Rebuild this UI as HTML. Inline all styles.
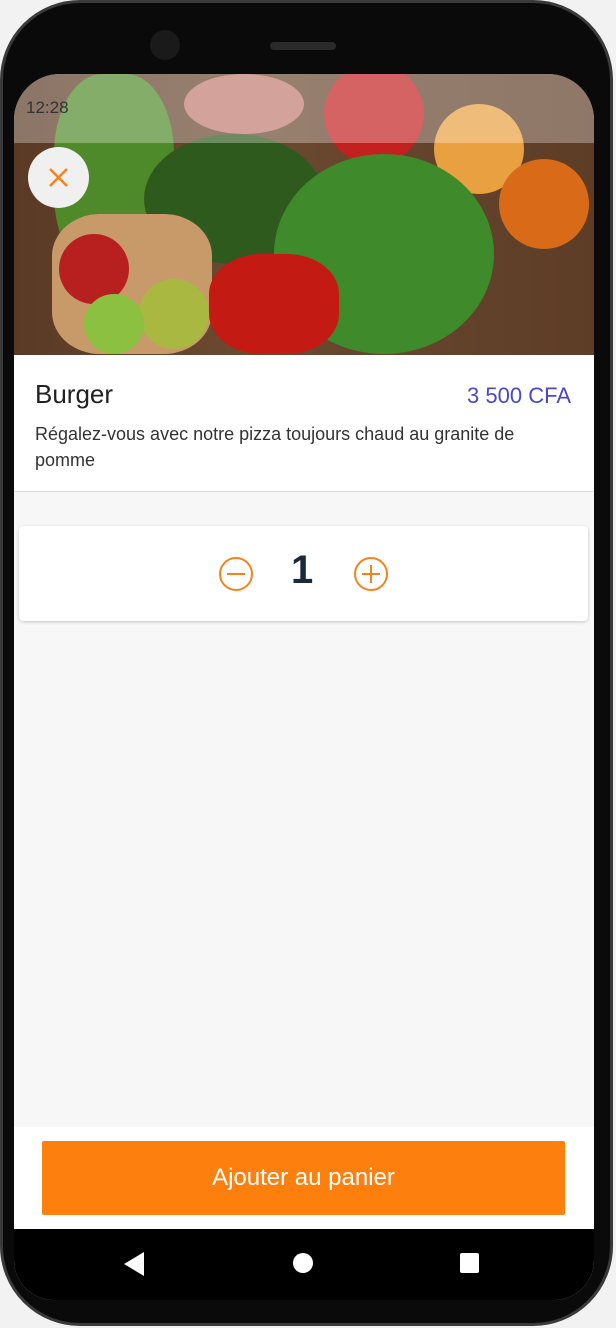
<!DOCTYPE html>
<html><head><meta charset="utf-8"><style>
*{margin:0;padding:0;box-sizing:border-box}
body{width:616px;height:1328px;background:#f2f2f2;position:relative;overflow:hidden;font-family:"Liberation Sans",sans-serif}
.phone{position:absolute;left:0;top:0;width:613px;height:1326px;background:#0a0a0a;border-radius:80px;border:3px solid #3a3a3a}
.screen{position:absolute;left:14px;top:74px;width:580px;height:1226px;background:#f7f7f7;border-radius:46px 46px 40px 40px;overflow:hidden}
.img{position:absolute;left:0;top:0;width:580px;height:281px;background:linear-gradient(90deg,#5a3a25,#6b4a30 40%,#5e3d27);overflow:hidden}
.b{position:absolute;border-radius:50%}
.status{position:absolute;left:0;top:0;width:580px;height:69px;background:rgba(255,255,255,.3)}
.close{position:absolute;left:14px;top:73px;width:61px;height:61px;border-radius:50%;background:#f0f0f0}
.info{position:absolute;left:0;top:281px;width:580px;height:137px;background:#fff;border-bottom:1.5px solid #ddd}
.qty{position:absolute;left:5px;top:452px;width:569px;height:95px;background:#fff;border-radius:4px;box-shadow:0 1px 3px rgba(0,0,0,.2)}
.foot{position:absolute;left:0;top:1053px;width:580px;height:102px;background:#fff}
.btn{position:absolute;left:28px;top:14px;width:523px;height:74px;background:#fd7f0d;color:#fff;font-size:24px;text-align:center;line-height:74px;border-radius:2px}
.nav{position:absolute;left:0;top:1155px;width:580px;height:71px;background:#000}
</style></head><body>
<div class="phone"></div>
<div style="position:absolute;left:150px;top:30px;width:30px;height:30px;border-radius:50%;background:#1a1a1a"></div>
<div style="position:absolute;left:270px;top:42px;width:66px;height:8px;border-radius:4px;background:#2a2a2a"></div>
<div class="screen">
 <div class="img">
  <div class="b" style="left:40px;top:0;width:120px;height:200px;background:#4f8a2a;border-radius:40%"></div>
  <div class="b" style="left:170px;top:0;width:120px;height:60px;background:#c07a70"></div>
  <div class="b" style="left:310px;top:-10px;width:100px;height:100px;background:#c42020"></div>
  <div class="b" style="left:420px;top:30px;width:90px;height:90px;background:#e8a040"></div>
  <div class="b" style="left:485px;top:85px;width:90px;height:90px;background:#d86a18"></div>
  <div class="b" style="left:130px;top:60px;width:180px;height:130px;background:#2f5a1e"></div>
  <div class="b" style="left:260px;top:80px;width:220px;height:200px;background:#3f8a2a"></div>
  <div class="b" style="left:38px;top:140px;width:160px;height:140px;background:#c89a6a;border-radius:30%"></div>
  <div class="b" style="left:45px;top:160px;width:70px;height:70px;background:#b82020"></div>
  <div class="b" style="left:125px;top:205px;width:70px;height:70px;background:#a8b840"></div>
  <div class="b" style="left:70px;top:220px;width:60px;height:60px;background:#8cc040"></div>
  <div class="b" style="left:195px;top:180px;width:130px;height:100px;background:#c41a14;border-radius:40%"></div>
  <div class="status"></div>
  <div style="position:absolute;left:12px;top:24px;font-size:17px;color:#333">12:28</div>
  <div class="close"><svg width="61" height="61" viewBox="0 0 61 61"><path d="M22 22L39 39M39 22L22 39" stroke="#f5821f" stroke-width="2.5"/></svg></div>
 </div>
 <div class="info">
  <div style="position:absolute;left:21px;top:24px;font-size:26px;color:#222;font-weight:500">Burger</div>
  <div style="position:absolute;right:23px;top:28px;font-size:22px;color:#4a48c8">3 500 CFA</div>
  <div style="position:absolute;left:21px;top:66px;width:520px;font-size:18px;line-height:26px;color:#333">Régalez-vous avec notre pizza toujours chaud au granite de pomme</div>
 </div>
 <div class="qty">
  <svg style="position:absolute;left:199px;top:30px" width="36" height="36" viewBox="0 0 36 36"><circle cx="18" cy="18" r="16" fill="none" stroke="#f5821f" stroke-width="2"/><path d="M9 18h18" stroke="#f5821f" stroke-width="2"/></svg>
  <div style="position:absolute;left:272px;top:22px;font-size:40px;font-weight:bold;color:#1a2a3a">1</div>
  <svg style="position:absolute;left:334px;top:30px" width="36" height="36" viewBox="0 0 36 36"><circle cx="18" cy="18" r="16" fill="none" stroke="#f5821f" stroke-width="2"/><path d="M9 18h18M18 9v18" stroke="#f5821f" stroke-width="2"/></svg>
 </div>
 <div class="foot"><div class="btn">Ajouter au panier</div></div>
 <div class="nav">
  <svg style="position:absolute;left:110px;top:23px" width="20" height="24"><path d="M0 12L20 0V24Z" fill="#fff"/></svg>
  <div style="position:absolute;left:279px;top:24px;width:20px;height:20px;border-radius:50%;background:#fff"></div>
  <div style="position:absolute;left:446px;top:24px;width:19px;height:20px;border-radius:2px;background:#fff"></div>
 </div>
</div>
</body></html>
